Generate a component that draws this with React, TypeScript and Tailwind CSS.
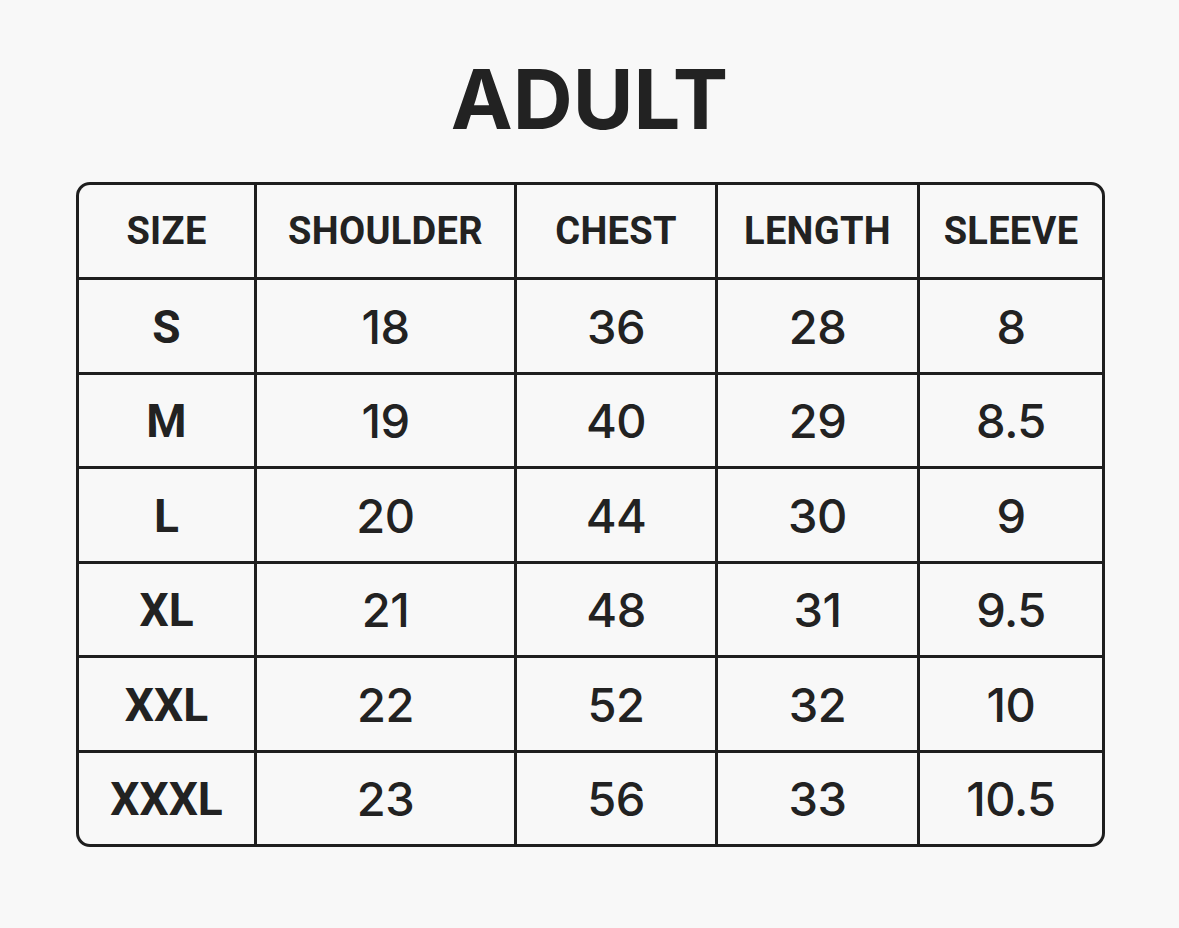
import React from "react";

const headers = ["SIZE", "SHOULDER", "CHEST", "LENGTH", "SLEEVE"];
const rows = [
  ["S", "18", "36", "28", "8"],
  ["M", "19", "40", "29", "8.5"],
  ["L", "20", "44", "30", "9"],
  ["XL", "21", "48", "31", "9.5"],
  ["XXL", "22", "52", "32", "10"],
  ["XXXL", "23", "56", "33", "10.5"],
];

export default function App() {
  return (
    <div
      className="w-[1179px] h-[928px] bg-[#f8f8f8] text-[#222222] flex flex-col items-center"
      style={{ fontFamily: "Inter, 'Noto Sans', sans-serif" }}
    >
      <h1 className="mt-[54px] text-[83px] leading-[90px] font-bold">ADULT</h1>
      <div className="mt-[38px] ml-[2px] rounded-[14px] border-[3px] border-[#1e1e1e] bg-[#1e1e1e] overflow-hidden">
        <div className="grid grid-cols-[175px_257px_198px_199px_182px] grid-rows-[92px_92px_91px_92px_91px_92px_91px] gap-[3px]">
          {headers.map((h) => (
            <div
              key={h}
              className="bg-[#f8f8f8] flex items-center justify-center text-[38px] font-bold tracking-[0.3px] pt-[1px]"
              style={{ fontFamily: "Roboto, 'Noto Sans', sans-serif" }}
            >
              {h}
            </div>
          ))}
          {rows.map((r) =>
            r.map((c, i) =>
              i === 0 ? (
                <div
                  key={r[0] + i}
                  className="bg-[#f8f8f8] flex items-center justify-center text-[46px] font-bold pt-[2px]"
                  style={{ fontFamily: "Roboto, 'Noto Sans', sans-serif" }}
                >
                  {c}
                </div>
              ) : (
                <div
                  key={r[0] + i}
                  className="bg-[#f8f8f8] flex items-center justify-center text-[47px] font-medium tracking-[-0.5px] pt-[2px]"
                >
                  {c}
                </div>
              )
            )
          )}
        </div>
      </div>
    </div>
  );
}
